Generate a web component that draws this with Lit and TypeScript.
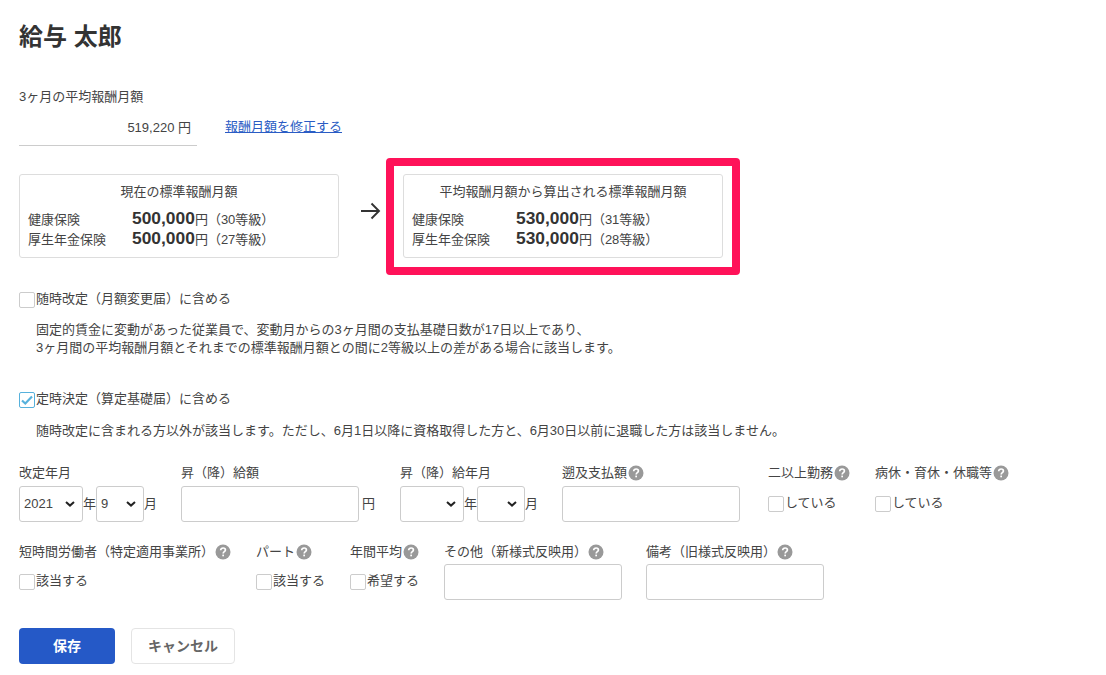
import { LitElement, html, css } from "lit";
import { customElement } from "lit/decorators.js";

const help = html`<svg class="help" viewBox="0 0 16 16" aria-hidden="true"><circle cx="8" cy="8" r="7.5" fill="#999"/><path d="M5.7 6.2c0-1.4 1-2.2 2.4-2.2 1.3 0 2.3.8 2.3 2 0 1.7-2.2 1.7-2.2 3.4" fill="none" stroke="#fff" stroke-width="1.7"/><rect x="7.3" y="10.6" width="1.7" height="1.7" fill="#fff"/></svg>`;

const chev = html`<svg class="chev" viewBox="0 0 10 6" aria-hidden="true"><path d="M1 1l4 3.6L9 1" fill="none" stroke="#222" stroke-width="2"/></svg>`;

@customElement("app-root")
export class AppRoot extends LitElement {
  static styles = css`
    :host {
      display: block;
      width: 1106px;
      height: 675px;
      overflow: hidden;
      background: #fff;
      color: #444;
      font: 13px/18px "Liberation Sans", "Noto Sans CJK JP", sans-serif;
      box-sizing: border-box;
      padding: 23px 0 0 19px;
    }
    * { box-sizing: border-box; }
    h1 { margin: 0; font-size: 24px; line-height: 28px; font-weight: 700; color: #333; }
    .avg-label { margin-top: 37px; height: 18px; }
    .avg { display: flex; margin-top: 12px; }
    .avg-value { width: 178px; height: 28px; border-bottom: 1px solid #ccc; text-align: right; padding-right: 6px; line-height: 20px; }
    .avg a { margin-left: 28px; color: #2a5cc4; text-decoration: underline; line-height: 17px; }
    .compare { display: flex; align-items: flex-start; margin-top: 12px; }
    .box { width: 320px; height: 84px; border: 1px solid #ddd; border-radius: 3px; padding: 8px 8px 0; }
    .current { margin-top: 16px; }
    .box-title { text-align: center; line-height: 18px; margin-bottom: 8px; }
    .amount-row { display: flex; align-items: baseline; height: 20px; }
    .amount-row .name { width: 104px; }
    .amount-row b { font-size: 17.4px; color: #333; }
    .arrow { width: 20px; height: 18px; margin: 44px 5px 0 22px; flex: none; }
    .hl { border: 8px solid #ff1259; border-radius: 4px; padding: 8px 9px 9px; }
    .check-head { display: flex; align-items: center; }
    .cb { width: 16px; height: 16px; border: 1px solid #ccc; border-radius: 2px; flex: none; margin-right: 1px; background: #fff; display: block; }
    .cb.on { border-color: #57b1dc; padding: 1px; }
    .cb.on svg { display: block; width: 12px; height: 12px; }
    .cb-text { line-height: 16px; margin-bottom: 2px; }
    .sec1 { margin-top: 16px; }
    .sec2 { margin-top: 34px; }
    .desc { margin: 12px 0 0 17px; line-height: 18px; }
    .desc2 { margin-top: 13px; }
    .row { display: flex; }
    .row1 { margin-top: 24px; }
    .row2 { margin-top: 21px; }
    .field > label { display: flex; align-items: center; height: 18px; white-space: nowrap; }
    .help { width: 16px; height: 16px; margin-left: 1px; flex: none; }
    .controls { display: flex; align-items: center; height: 36px; margin-top: 4px; }
    .select { height: 36px; border: 1px solid #ccc; border-radius: 3px; display: flex; align-items: center; justify-content: space-between; padding: 0 7px 0 4px; }
    .y { width: 64px; }
    .m { width: 48px; }
    .chev { width: 10px; height: 6px; }
    .unit { width: 13px; flex: none; }
    .unit-wide { margin-left: 3px; }
    .input { height: 36px; width: 178px; border: 1px solid #ccc; border-radius: 3px; }
    .checks { display: flex; align-items: center; height: 16px; margin-top: 14px; white-space: nowrap; }
    .checks2 { margin-top: 13px; }
    .row2 .input { margin-top: 3px; display: block; }
    .actions { display: flex; gap: 16px; margin-top: 28px; }
    .btn { height: 36px; border-radius: 4px; display: flex; align-items: center; justify-content: center; font-weight: 700; font-size: 14px; }
    .save { width: 96px; background: #2559c7; color: #fff; }
    .cancel { width: 104px; background: #fff; border: 1px solid #e4e4e4; color: #666; }
  `;

  private box(title: string, a: string, g1: string, g2: string, cls = "") {
    return html`<div class="box ${cls}">
      <div class="box-title">${title}</div>
      <div class="amount-row"><span class="name">健康保険</span><b>${a}</b><span>円（${g1}等級）</span></div>
      <div class="amount-row"><span class="name">厚生年金保険</span><b>${a}</b><span>円（${g2}等級）</span></div>
    </div>`;
  }

  private check(text: string, on = false) {
    return html`<span class="cb ${on ? "on" : ""}">${on
        ? html`<svg viewBox="0 0 12 12"><path d="M1 6.5l3.3 3L11 2.5" fill="none" stroke="#57b1dc" stroke-width="2.2"/></svg>`
        : ""}</span><span class="cb-text">${text}</span>`;
  }

  private select(cls: string, value = "") {
    return html`<div class="select ${cls}"><span>${value}</span>${chev}</div>`;
  }

  render() {
    return html`
      <h1>給与 太郎</h1>
      <div class="avg-label">3ヶ月の平均報酬月額</div>
      <div class="avg">
        <div class="avg-value">519,220 円</div>
        <a href="#">報酬月額を修正する</a>
      </div>
      <div class="compare">
        ${this.box("現在の標準報酬月額", "500,000", "30", "27", "current")}
        <svg class="arrow" viewBox="0 0 20 18" aria-hidden="true"><path d="M0 9h18M10.5 1.5L18 9l-7.5 7.5" fill="none" stroke="#333" stroke-width="1.9"/></svg>
        <div class="hl">${this.box("平均報酬月額から算出される標準報酬月額", "530,000", "31", "28")}</div>
      </div>

      <div class="sec1 check-head">${this.check("随時改定（月額変更届）に含める")}</div>
      <div class="desc">固定的賃金に変動があった従業員で、変動月からの3ヶ月間の支払基礎日数が17日以上であり、<br />3ヶ月間の平均報酬月額とそれまでの標準報酬月額との間に2等級以上の差がある場合に該当します。</div>
      <div class="sec2 check-head">${this.check("定時決定（算定基礎届）に含める", true)}</div>
      <div class="desc desc2">随時改定に含まれる方以外が該当します。ただし、6月1日以降に資格取得した方と、6月30日以前に退職した方は該当しません。</div>

      <div class="row row1">
        <div class="field" style="width:162px">
          <label>改定年月</label>
          <div class="controls">${this.select("y", "2021")}<span class="unit">年</span>${this.select("m", "9")}<span class="unit">月</span></div>
        </div>
        <div class="field" style="width:219px">
          <label>昇（降）給額</label>
          <div class="controls"><div class="input"></div><span class="unit unit-wide">円</span></div>
        </div>
        <div class="field" style="width:162px">
          <label>昇（降）給年月</label>
          <div class="controls">${this.select("y")}<span class="unit">年</span>${this.select("m")}<span class="unit">月</span></div>
        </div>
        <div class="field" style="width:206px">
          <label>遡及支払額${help}</label>
          <div class="controls"><div class="input"></div></div>
        </div>
        <div class="field" style="width:107px">
          <label>二以上勤務${help}</label>
          <div class="checks">${this.check("している")}</div>
        </div>
        <div class="field">
          <label>病休・育休・休職等${help}</label>
          <div class="checks">${this.check("している")}</div>
        </div>
      </div>

      <div class="row row2">
        <div class="field" style="width:237px">
          <label>短時間労働者（特定適用事業所）${help}</label>
          <div class="checks checks2">${this.check("該当する")}</div>
        </div>
        <div class="field" style="width:94px">
          <label>パート${help}</label>
          <div class="checks checks2">${this.check("該当する")}</div>
        </div>
        <div class="field" style="width:94px">
          <label>年間平均${help}</label>
          <div class="checks checks2">${this.check("希望する")}</div>
        </div>
        <div class="field" style="width:202px">
          <label>その他（新様式反映用）${help}</label>
          <div class="input"></div>
        </div>
        <div class="field">
          <label>備考（旧様式反映用）${help}</label>
          <div class="input"></div>
        </div>
      </div>

      <div class="actions">
        <div class="btn save">保存</div>
        <div class="btn cancel">キャンセル</div>
      </div>
    `;
  }
}
